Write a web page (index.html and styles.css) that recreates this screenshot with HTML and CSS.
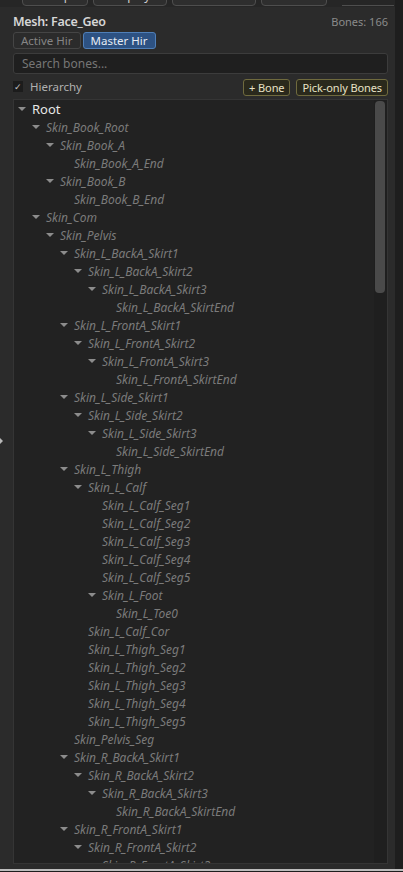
FILE: index.html
```html
<!DOCTYPE html>
<html lang="en">
<head>
    <meta charset="UTF-8">
    <meta name="viewport" content="width=device-width, initial-scale=1.0">
    <title>Bone Hierarchy</title>
    <link rel="stylesheet" href="styles.css">
</head>
<body>
    <div class="window">
        <div class="main">
            <div class="toolbar">
                <span class="tool-btn w-setup">Setup</span>
                <span class="tool-btn w-display">Display</span>
                <span class="tool-btn w-textured">Textured</span>
                <span class="tool-btn w-unlit">Unlit</span>
                <span class="tool-sep"></span>
                <span class="tool-field">Sel: 0</span>
            </div>

            <div class="header">
                <span class="mesh-name">Mesh: Face_Geo</span>
                <span class="bone-count">Bones: 166</span>
            </div>

            <div class="tabs">
                <button class="tab">Active Hir</button>
                <button class="tab selected">Master Hir</button>
            </div>

            <input class="search" type="text" placeholder="Search bones...">

            <div class="options">
                <label class="check">
                    <span class="box">&#10003;</span>
                    <span>Hierarchy</span>
                </label>
                <div class="actions">
                    <button class="action">+ Bone</button>
                    <button class="action">Pick-only Bones</button>
                </div>
            </div>

            <div class="tree">
                <div class="rows">
                    <div class="row root l0"><span class="arrow"></span>Root</div>
                    <div class="row l1"><span class="arrow"></span>Skin_Book_Root</div>
                    <div class="row l2"><span class="arrow"></span>Skin_Book_A</div>
                    <div class="row l3"><span class="leaf"></span>Skin_Book_A_End</div>
                    <div class="row l2"><span class="arrow"></span>Skin_Book_B</div>
                    <div class="row l3"><span class="leaf"></span>Skin_Book_B_End</div>
                    <div class="row l1"><span class="arrow"></span>Skin_Com</div>
                    <div class="row l2"><span class="arrow"></span>Skin_Pelvis</div>
                    <div class="row l3"><span class="arrow"></span>Skin_L_BackA_Skirt1</div>
                    <div class="row l4"><span class="arrow"></span>Skin_L_BackA_Skirt2</div>
                    <div class="row l5"><span class="arrow"></span>Skin_L_BackA_Skirt3</div>
                    <div class="row l6"><span class="leaf"></span>Skin_L_BackA_SkirtEnd</div>
                    <div class="row l3"><span class="arrow"></span>Skin_L_FrontA_Skirt1</div>
                    <div class="row l4"><span class="arrow"></span>Skin_L_FrontA_Skirt2</div>
                    <div class="row l5"><span class="arrow"></span>Skin_L_FrontA_Skirt3</div>
                    <div class="row l6"><span class="leaf"></span>Skin_L_FrontA_SkirtEnd</div>
                    <div class="row l3"><span class="arrow"></span>Skin_L_Side_Skirt1</div>
                    <div class="row l4"><span class="arrow"></span>Skin_L_Side_Skirt2</div>
                    <div class="row l5"><span class="arrow"></span>Skin_L_Side_Skirt3</div>
                    <div class="row l6"><span class="leaf"></span>Skin_L_Side_SkirtEnd</div>
                    <div class="row l3"><span class="arrow"></span>Skin_L_Thigh</div>
                    <div class="row l4"><span class="arrow"></span>Skin_L_Calf</div>
                    <div class="row l5"><span class="leaf"></span>Skin_L_Calf_Seg1</div>
                    <div class="row l5"><span class="leaf"></span>Skin_L_Calf_Seg2</div>
                    <div class="row l5"><span class="leaf"></span>Skin_L_Calf_Seg3</div>
                    <div class="row l5"><span class="leaf"></span>Skin_L_Calf_Seg4</div>
                    <div class="row l5"><span class="leaf"></span>Skin_L_Calf_Seg5</div>
                    <div class="row l5"><span class="arrow"></span>Skin_L_Foot</div>
                    <div class="row l6"><span class="leaf"></span>Skin_L_Toe0</div>
                    <div class="row l4"><span class="leaf"></span>Skin_L_Calf_Cor</div>
                    <div class="row l4"><span class="leaf"></span>Skin_L_Thigh_Seg1</div>
                    <div class="row l4"><span class="leaf"></span>Skin_L_Thigh_Seg2</div>
                    <div class="row l4"><span class="leaf"></span>Skin_L_Thigh_Seg3</div>
                    <div class="row l4"><span class="leaf"></span>Skin_L_Thigh_Seg4</div>
                    <div class="row l4"><span class="leaf"></span>Skin_L_Thigh_Seg5</div>
                    <div class="row l3"><span class="leaf"></span>Skin_Pelvis_Seg</div>
                    <div class="row l3"><span class="arrow"></span>Skin_R_BackA_Skirt1</div>
                    <div class="row l4"><span class="arrow"></span>Skin_R_BackA_Skirt2</div>
                    <div class="row l5"><span class="arrow"></span>Skin_R_BackA_Skirt3</div>
                    <div class="row l6"><span class="leaf"></span>Skin_R_BackA_SkirtEnd</div>
                    <div class="row l3"><span class="arrow"></span>Skin_R_FrontA_Skirt1</div>
                    <div class="row l4"><span class="arrow"></span>Skin_R_FrontA_Skirt2</div>
                    <div class="row l5"><span class="arrow"></span>Skin_R_FrontA_Skirt3</div>
                </div>
                <div class="scroll-track">
                    <div class="thumb"></div>
                </div>
            </div>
        </div>
        <div class="edge"></div>
        <span class="splitter"></span>
    </div>
    <div class="status-line"></div>
</body>
</html>
```

FILE: styles.css
```css
body {
    margin: 0;
    height: 872px;
    overflow: hidden;
    background: #1e1e1e;
    font-family: "Noto Sans", "Open Sans", sans-serif;
    display: flex;
    flex-direction: column;
}
.window {
    position: relative;
    display: flex;
    height: 869px;
}
.main {
    flex: 1;
    min-width: 0;
    background: #2b2b2b;
    padding: 0 7px 5px 13px;
    display: flex;
    flex-direction: column;
}
.edge {
    width: 8px;
    background: #1e1e1e;
}
.splitter {
    position: absolute;
    left: 0;
    top: 438px;
    border-top: 3px solid transparent;
    border-bottom: 3px solid transparent;
    border-left: 3px solid #b8b8b8;
}
.status-line {
    height: 2px;
    background: #bdbdbd;
}

/* top toolbar, mostly scrolled out of view */
.toolbar {
    height: 7px;
    margin: 0 -7px 0 -13px;
    padding: 0 7px 0 22px;
    background: #262626;
    display: flex;
    align-items: flex-end;
    gap: 5px;
    overflow: hidden;
}
.tool-btn {
    flex-shrink: 0;
    box-sizing: border-box;
    height: 20px;
    padding-top: 2px;
    border: 1px solid #4e4e4e;
    border-radius: 4px;
    background: #2e2e2e;
    color: #cfcfcf;
    font-size: 12px;
    text-align: center;
    line-height: 14px;
    margin-bottom: 1px;
}
.w-setup { width: 66px; }
.w-display { width: 74px; }
.w-textured { width: 84px; }
.w-unlit { width: 66px; }
.tool-sep {
    width: 1px;
    height: 7px;
    background: #555;
    margin: 0 2px 0 3px;
}
.tool-field {
    flex-shrink: 0;
    box-sizing: border-box;
    width: 52px;
    height: 20px;
    padding-top: 2px;
    border-bottom: 1px solid #4e4e4e;
    color: #cfcfcf;
    font-size: 12px;
    line-height: 14px;
    margin-bottom: 1px;
}

.header {
    display: flex;
    justify-content: space-between;
    align-items: center;
    height: 18px;
    margin-top: 5px;
}
.mesh-name {
    color: #d6d6d6;
    font-size: 12.5px;
    font-weight: 600;
    letter-spacing: -0.3px;
}
.bone-count {
    color: #8a8a8a;
    font-size: 11px;
}

.tabs {
    display: flex;
    gap: 2px;
    margin-top: 2px;
}
.tab {
    height: 17px;
    padding: 0 7px;
    border: 1px solid #454545;
    border-radius: 3px;
    background: #2b2b2b;
    color: #858585;
    font-family: inherit;
    font-size: 11.5px;
    line-height: 14px;
}
.tab.selected {
    background: #2d5283;
    border-color: #4f7fb8;
    color: #e4ebf3;
}

.search {
    box-sizing: border-box;
    height: 21px;
    margin-top: 4px;
    padding: 0 8px;
    background: #1f1f1f;
    border: 1px solid #3c3c3c;
    border-radius: 3px;
    color: #ccc;
    font-family: inherit;
    font-size: 12px;
    outline: none;
}
.search::placeholder {
    color: #767676;
}

.options {
    display: flex;
    justify-content: space-between;
    align-items: center;
    height: 17px;
    margin-top: 5px;
}
.check {
    display: flex;
    align-items: center;
    gap: 7px;
    color: #b0b0b0;
    font-size: 11.5px;
    margin-top: -2px;
}
.box {
    width: 10px;
    height: 11px;
    background: #1c1c1c;
    color: #c4c4c4;
    font-size: 9px;
    line-height: 11px;
    text-align: center;
}
.actions {
    display: flex;
    gap: 6px;
}
.action {
    height: 17px;
    padding: 0 5px;
    border: 1px solid #6f6a3e;
    border-radius: 3px;
    background: #2a291c;
    color: #e8e2c6;
    font-family: inherit;
    font-size: 11px;
    letter-spacing: -0.1px;
    line-height: 14px;
}

/* bone tree */
.tree {
    flex: 1;
    display: flex;
    margin-top: 3px;
    background: #222;
    border: 1px solid #353535;
    overflow: hidden;
}
.rows {
    flex: 1;
    overflow: hidden;
}
.row {
    display: flex;
    align-items: center;
    height: 18px;
    white-space: nowrap;
    color: #7b7b7b;
    font-size: 12px;
    font-style: italic;
}
.row.root {
    color: #e6e6e6;
    font-size: 13px;
    font-style: normal;
}
.arrow,
.leaf {
    flex-shrink: 0;
    width: 14px;
}
.arrow::before {
    content: "";
    display: block;
    width: 0;
    border-left: 4px solid transparent;
    border-right: 4px solid transparent;
    border-top: 4px solid #8c8c8c;
}
.l0 { padding-left: 4px; }
.l1 { padding-left: 18px; }
.l2 { padding-left: 32px; }
.l3 { padding-left: 46px; }
.l4 { padding-left: 60px; }
.l5 { padding-left: 74px; }
.l6 { padding-left: 88px; }

.scroll-track {
    width: 12px;
    background: #1f1f1f;
    padding: 1px 0 0 1px;
}
.thumb {
    width: 10px;
    height: 192px;
    background: #4a4a4a;
    border-radius: 4px;
}
```
